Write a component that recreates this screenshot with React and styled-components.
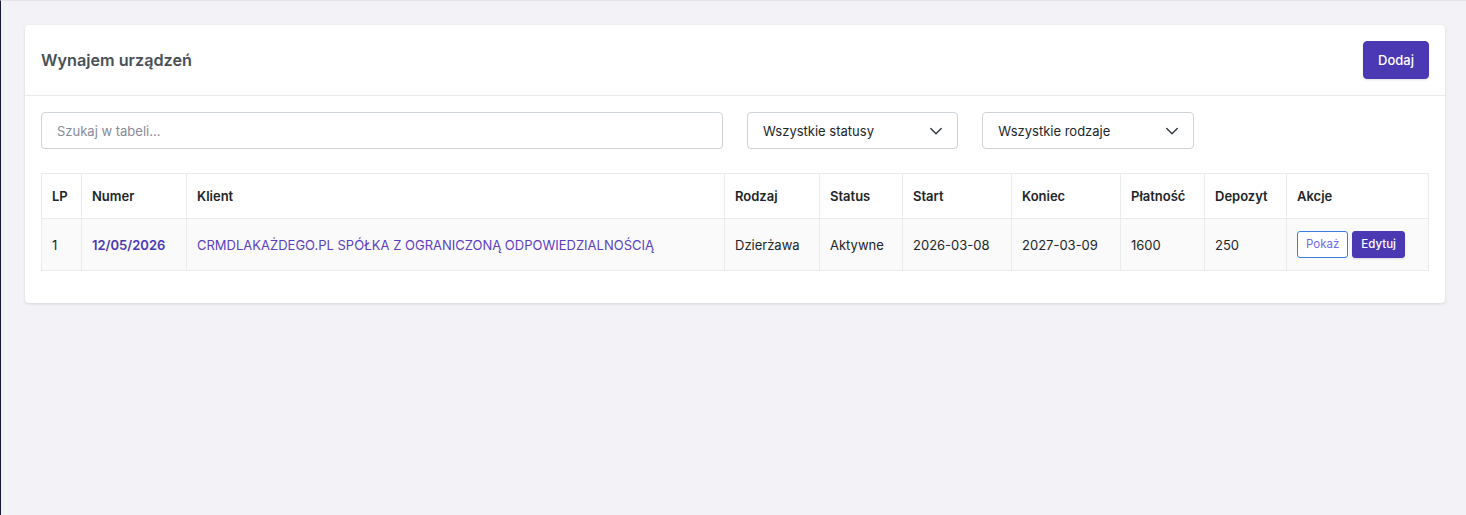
import React from "react";
import styled, { createGlobalStyle } from "styled-components";

const Global = createGlobalStyle`
  html, body { margin: 0; padding: 0; }
  body { font-family: Inter, "Noto Sans", sans-serif; background: #f2f2f7; color: #212529; }
  * { box-sizing: border-box; }
`;

const Page = styled.div`
  min-height: 515px;
  border-left: 1px solid #161a33;
  border-top: 1px solid #e4e4ea;
  padding: 24px 21px 24px 24px;
  background: #f2f2f7;
`;

const Card = styled.section`
  background: #fff;
  border-radius: 4px;
  box-shadow: 0 1px 3px rgba(56, 65, 74, 0.15);
`;

const CardHeader = styled.div`
  display: flex;
  align-items: center;
  justify-content: space-between;
  padding: 16px;
  border-bottom: 1px solid #e9ebec;
`;

const Title = styled.h4`
  margin: 0;
  font-size: 16.2px;
  font-weight: 600;
  color: #495057;
`;

const Button = styled.button`
  font-family: inherit;
  border-radius: ${(p) => (p.$small ? "3px" : "4px")};
  cursor: pointer;
  line-height: 1;
  font-size: ${(p) => (p.$small ? "11.5px" : "13px")};
  height: ${(p) => (p.$small ? "27px" : "38px")};
  padding: ${(p) => (p.$small ? "0 8px" : "0 14px")};
  background: ${(p) => (p.$outline ? "#fff" : "#4b38b3")};
  color: ${(p) => (p.$outline ? "#6f6af0" : "#fff")};
  border: 1px solid ${(p) => (p.$outline ? "#3b7ddd" : "#4b38b3")};
  box-shadow: ${(p) => (p.$outline ? "none" : "0 1px 2px rgba(0,0,0,0.12)")};
  font-weight: ${(p) => (p.$outline ? 400 : 500)};
`;

const CardBody = styled.div`
  padding: 16px 16px 32px;
`;

const Filters = styled.div`
  display: grid;
  grid-template-columns: repeat(12, 1fr);
  column-gap: 24px;
  margin-bottom: 24px;
`;

const Field = styled.div`
  grid-column: span ${(p) => p.$span};
`;

const Input = styled.input`
  width: 100%;
  height: 37px;
  border: 1px solid #ced4da;
  border-radius: 4px;
  padding: 0 15px;
  font-family: inherit;
  font-size: 13px;
  color: #212529;
  outline: none;
  &::placeholder { color: #878a99; }
`;

const Select = styled.div`
  height: 37px;
  border: 1px solid #ced4da;
  border-radius: 4px;
  padding: 0 15px 0 15px;
  display: flex;
  align-items: center;
  justify-content: space-between;
  font-size: 13px;
  color: #212529;
  background: #fff;
`;

const Table = styled.table`
  width: 100%;
  border-collapse: collapse;
  font-size: 13px;
`;

const Th = styled.th`
  text-align: left;
  font-weight: 600;
  color: #212529;
  height: 45px;
  padding: 0 10px;
  border: 1px solid #e9ebec;
  width: ${(p) => p.$w || "auto"};
`;

const Row = styled.tr`
  background: #fafafa;
`;

const Td = styled.td`
  height: 52px;
  padding: 0 10px;
  border: 1px solid #e9ebec;
  color: ${(p) => (p.$accent ? "#4b38b3" : p.$link ? "#5a3fc0" : "#212529")};
  font-weight: ${(p) => (p.$accent ? 600 : 400)};
  white-space: nowrap;
`;

const Actions = styled.div`
  display: flex;
  gap: 4px;
`;

const Chevron = () => (
  <svg width="12" height="12" viewBox="0 0 12 12" fill="none" stroke="#343a40" strokeWidth="1.4" strokeLinecap="round" strokeLinejoin="round">
    <path d="M0.8 3.5l5.2 5.2 5.2-5.2" />
  </svg>
);

const cols = [
  ["LP", "40px"],
  ["Numer", "105px"],
  ["Klient", "538px"],
  ["Rodzaj", "95px"],
  ["Status", "83px"],
  ["Start", "109px"],
  ["Koniec", "109px"],
  ["Płatność", "84px"],
  ["Depozyt", "82px"],
  ["Akcje", "auto"],
];

export default function App() {
  return (
    <>
      <Global />
      <Page>
        <Card>
          <CardHeader>
            <Title>Wynajem urządzeń</Title>
            <Button>Dodaj</Button>
          </CardHeader>
          <CardBody>
            <Filters>
              <Field $span={6}>
                <Input placeholder="Szukaj w tabeli..." />
              </Field>
              <Field $span={2}>
                <Select>
                  <span>Wszystkie statusy</span>
                  <Chevron />
                </Select>
              </Field>
              <Field $span={2}>
                <Select>
                  <span>Wszystkie rodzaje</span>
                  <Chevron />
                </Select>
              </Field>
            </Filters>
            <Table>
              <thead>
                <tr>
                  {cols.map(([c, w]) => (
                    <Th key={c} $w={w}>{c}</Th>
                  ))}
                </tr>
              </thead>
              <tbody>
                <Row>
                  <Td>1</Td>
                  <Td $accent>12/05/2026</Td>
                  <Td $link>CRMDLAKAŻDEGO.PL SPÓŁKA Z OGRANICZONĄ ODPOWIEDZIALNOŚCIĄ</Td>
                  <Td>Dzierżawa</Td>
                  <Td>Aktywne</Td>
                  <Td>2026-03-08</Td>
                  <Td>2027-03-09</Td>
                  <Td>1600</Td>
                  <Td>250</Td>
                  <Td>
                    <Actions>
                      <Button $small $outline>Pokaż</Button>
                      <Button $small>Edytuj</Button>
                    </Actions>
                  </Td>
                </Row>
              </tbody>
            </Table>
          </CardBody>
        </Card>
      </Page>
    </>
  );
}
